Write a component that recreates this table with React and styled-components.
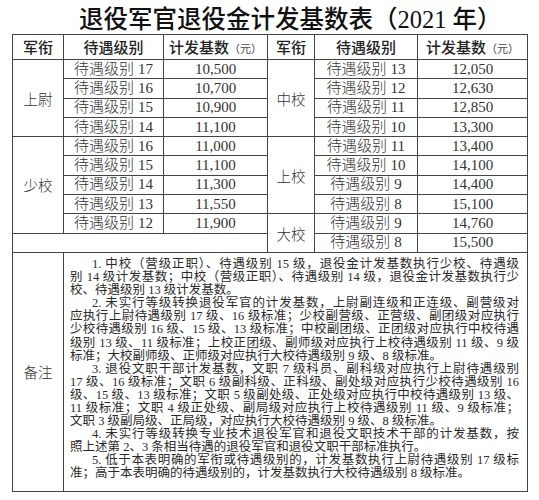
import React from "react";
import styled, { createGlobalStyle } from "styled-components";

const GlobalStyle = createGlobalStyle`
  body {
    margin: 0;
    background: #fff;
    font-family: "Liberation Serif", "Noto Sans CJK SC", serif;
    color: #222;
  }
`;

const Page = styled.div`
  width: 539px;
  padding: 0 12px;
  box-sizing: border-box;
`;

const Title = styled.h1`
  margin: 0;
  height: 34px;
  padding-left: 67px;
  display: flex;
  align-items: center;
  font-family: "Liberation Serif", "Noto Sans CJK SC", sans-serif;
  font-size: 24.5px;
  font-weight: 500;
  color: #111;
`;

const Table = styled.table`
  width: 515px;
  border-collapse: collapse;
  table-layout: fixed;
  border: 1.5px solid #2a2a2a;
`;

const Col = styled.col`
  width: ${({ $w }) => $w}px;
`;

const HeadCell = styled.th`
  height: 24px;
  padding: 0;
  border: 1px solid #444;
  font-family: "Noto Sans CJK SC", sans-serif;
  font-size: 15px;
  font-weight: 500;
  color: #222;
  text-align: center;
  vertical-align: middle;
`;

const HeadText = styled.div`
  height: 22px;
  line-height: 22px;
`;

const Unit = styled.span`
  font-size: 11px;
  font-weight: 400;
  color: #444;
`;

const Cell = styled.td`
  height: 18.3px;
  padding: 0;
  border: 1px solid #444;
  font-size: 15px;
  font-weight: 300;
  color: #333;
  text-align: center;
  vertical-align: middle;
  white-space: nowrap;
`;

const CellText = styled.div`
  height: 17px;
  line-height: 17px;
`;

const RankCell = styled(Cell)`
  font-family: "Noto Sans CJK SC", sans-serif;
  font-size: 14.5px;
`;

const NoteLabel = styled.td`
  padding: 0;
  border: 1px solid #444;
  font-family: "Noto Sans CJK SC", sans-serif;
  font-size: 14.5px;
  font-weight: 300;
  color: #333;
  text-align: center;
  vertical-align: middle;
`;

const NoteCell = styled.td`
  padding: 5px 8px 10px 6px;
  border: 1px solid #444;
  vertical-align: top;
  font-size: 12.5px;
  color: #2a2a2a;
`;

const NoteLine = styled.div`
  height: 13.1px;
  line-height: 13.1px;
  text-align: justify;
  text-align-last: ${({ $last }) => ($last ? "left" : "justify")};
  padding-left: ${({ $indent }) => ($indent ? "22px" : "0")};
`;

const left = [
  { rank: "上尉", rows: [["17", "10,500"], ["16", "10,700"], ["15", "10,900"], ["14", "11,100"]] },
  { rank: "少校", rows: [["16", "11,000"], ["15", "11,100"], ["14", "11,300"], ["13", "11,550"], ["12", "11,900"]] },
];

const right = [
  { rank: "中校", rows: [["13", "12,050"], ["12", "12,630"], ["11", "12,850"], ["10", "13,300"]] },
  { rank: "上校", rows: [["11", "13,400"], ["10", "14,100"], ["9", "14,400"], ["8", "15,100"]] },
  { rank: "大校", rows: [["9", "14,760"], ["8", "15,500"]] },
];

const notes = [
  [
    "1. 中校（营级正职）、待遇级别 15 级，退役金计发基数执行少校、待遇级",
    "别 14 级计发基数；中校（营级正职）、待遇级别 14 级，退役金计发基数执行少",
    "校、待遇级别 13 级计发基数。",
  ],
  [
    "2. 未实行等级转换退役军官的计发基数，上尉副连级和正连级、副营级对",
    "应执行上尉待遇级别 17 级、16 级标准；少校副营级、正营级、副团级对应执行",
    "少校待遇级别 16 级、15 级、13 级标准；中校副团级、正团级对应执行中校待遇",
    "级别 13 级、11 级标准；上校正团级、副师级对应执行上校待遇级别 11 级、9 级",
    "标准；大校副师级、正师级对应执行大校待遇级别 9 级、8 级标准。",
  ],
  [
    "3. 退役文职干部计发基数，文职 7 级科员、副科级对应执行上尉待遇级别",
    "17 级、16 级标准；文职 6 级副科级、正科级、副处级对应执行少校待遇级别 16",
    "级、15 级、13 级标准；文职 5 级副处级、正处级对应执行中校待遇级别 13 级、",
    "11 级标准；文职 4 级正处级、副局级对应执行上校待遇级别 11 级、9 级标准；",
    "文职 3 级副局级、正局级，对应执行大校待遇级别 9 级、8 级标准。",
  ],
  [
    "4. 未实行等级转换专业技术退役军官和退役文职技术干部的计发基数，按",
    "照上述第 2、3 条相当待遇的退役军官和退役文职干部标准执行。",
  ],
  [
    "5. 低于本表明确的军衔或待遇级别的，计发基数执行上尉待遇级别 17 级标",
    "准；高于本表明确的待遇级别的，计发基数执行大校待遇级别 8 级标准。",
  ],
];

// flatten a side into 10 rows of cells
function sideRows(groups, padEmpty) {
  const out = [];
  groups.forEach((g) => {
    g.rows.forEach(([level, amount], i) => {
      out.push(
        <React.Fragment key={g.rank + level}>
          {i === 0 && (
            <RankCell rowSpan={g.rows.length}>
              <CellText>{g.rank}</CellText>
            </RankCell>
          )}
          <Cell>
            <CellText>待遇级别 {level}</CellText>
          </Cell>
          <Cell>
            <CellText>{amount}</CellText>
          </Cell>
        </React.Fragment>
      );
    });
  });
  while (padEmpty && out.length < 10) {
    out.push(<Cell key={"empty" + out.length} colSpan={3} />);
  }
  return out;
}

export default function App() {
  const leftRows = sideRows(left, true);
  const rightRows = sideRows(right, false);

  return (
    <>
      <GlobalStyle />
      <Page>
        <Title>退役军官退役金计发基数表（2021 年）</Title>
        <Table>
          <colgroup>
            <Col $w={51} />
            <Col $w={100} />
            <Col $w={104} />
            <Col $w={47} />
            <Col $w={103} />
            <Col $w={110} />
          </colgroup>
          <thead>
            <tr>
              <HeadCell><HeadText>军衔</HeadText></HeadCell>
              <HeadCell><HeadText>待遇级别</HeadText></HeadCell>
              <HeadCell>
                <HeadText>计发基数<Unit>（元）</Unit></HeadText>
              </HeadCell>
              <HeadCell><HeadText>军衔</HeadText></HeadCell>
              <HeadCell><HeadText>待遇级别</HeadText></HeadCell>
              <HeadCell>
                <HeadText>计发基数<Unit>（元）</Unit></HeadText>
              </HeadCell>
            </tr>
          </thead>
          <tbody>
            {leftRows.map((l, i) => (
              <tr key={i}>
                {l}
                {rightRows[i]}
              </tr>
            ))}
            <tr>
              <NoteLabel>备注</NoteLabel>
              <NoteCell colSpan={5}>
                {notes.map((para, p) =>
                  para.map((line, i) => (
                    <NoteLine
                      key={p + "-" + i}
                      $indent={i === 0}
                      $last={i === para.length - 1}
                    >
                      {line}
                    </NoteLine>
                  ))
                )}
              </NoteCell>
            </tr>
          </tbody>
        </Table>
      </Page>
    </>
  );
}
